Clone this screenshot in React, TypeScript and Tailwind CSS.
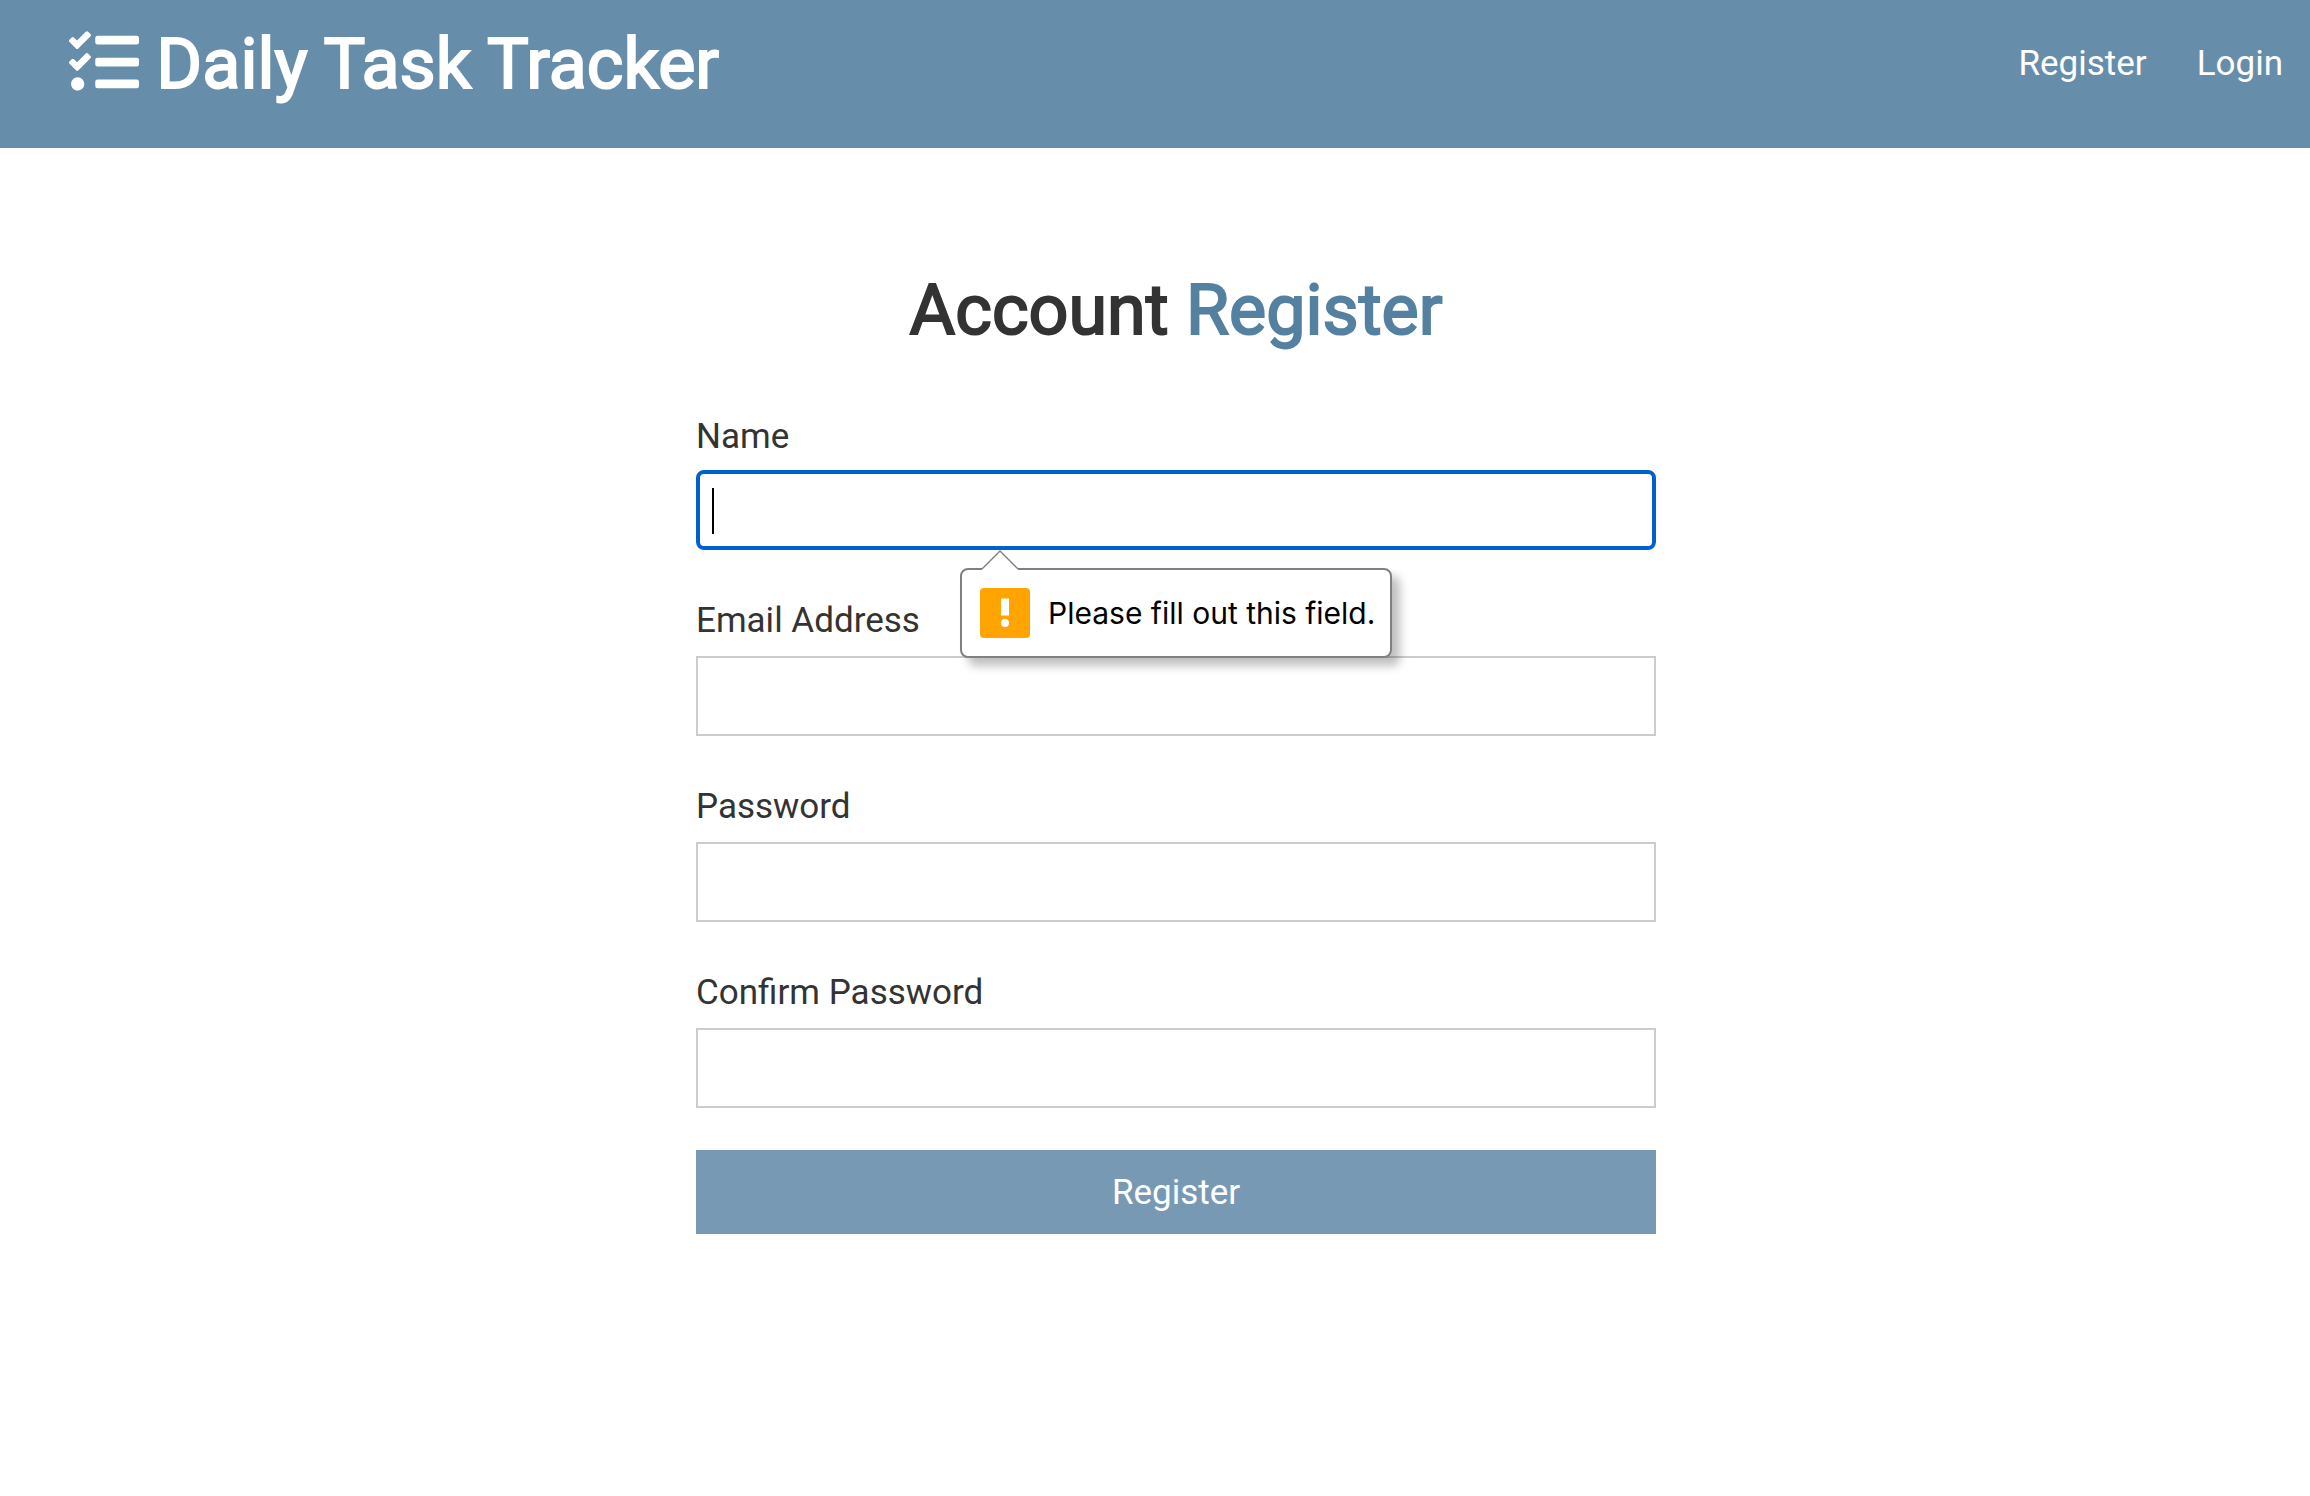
import { FaTasks } from "react-icons/fa";

const fields = [
  { id: "name", label: "Name", type: "text" },
  { id: "email", label: "Email Address", type: "email" },
  { id: "password", label: "Password", type: "password" },
  { id: "password2", label: "Confirm Password", type: "password" },
];

function Header() {
  return (
    <header className="flex items-center justify-between bg-[#668eaa] pt-6 pr-[27px] pb-11 pl-[69px] text-white">
      <h1 className="text-[70px] leading-[80px] font-normal [-webkit-text-stroke:2px_currentColor]">
        <FaTasks className="inline align-[-9px]" aria-hidden="true" /> Daily Task Tracker
      </h1>
      <nav className="flex gap-[50px]">
        <a href="#register">Register</a>
        <a href="#login">Login</a>
      </nav>
    </header>
  );
}

function ValidationBubble() {
  return (
    <div
      role="alert"
      className="absolute top-[98px] left-[264px] z-10 flex w-[432px] items-center gap-[18px] rounded-lg border-2 border-[#808080] bg-white p-[18px] font-['Inter',sans-serif] text-[30px] leading-[50px] whitespace-nowrap text-black shadow-[8px_8px_10px_rgba(0,0,0,0.25)]"
    >
      <svg className="absolute -top-5 left-5 h-5 w-9" viewBox="0 0 36 20" aria-hidden="true">
        <path d="M0 20V19L18 1L36 19V20Z" fill="#fff" />
        <path d="M0 19L18 1L36 19" fill="none" stroke="#808080" strokeWidth="1.4" />
      </svg>
      <svg className="size-[50px] shrink-0" viewBox="0 0 50 50" aria-hidden="true">
        <rect width="50" height="50" rx="4" fill="#ffa400" />
        <rect x="21" y="10.500" width="8" height="17" fill="#fff" />
        <circle cx="25" cy="35" r="4" fill="#fff" />
      </svg>
      <span>Please fill out this field.</span>
    </div>
  );
}

export default function App() {
  return (
    <div className="min-h-screen bg-white font-['Roboto',sans-serif] text-[35px] leading-[58px] text-[#333333]">
      <Header />
      <main className="pt-[122px] pl-[42px]">
        <div className="mx-auto max-w-[960px]">
          <h2 className="mb-[58px] text-center text-[70px] leading-[80px] font-normal [-webkit-text-stroke:2px_currentColor]">
            Account <span className="text-[#5581a1]">Register</span>
          </h2>
          <form className="flex flex-col gap-[42px]">
            {fields.map((field, i) => (
              <div key={field.id} className={i === 0 ? "flex flex-col gap-1" : "flex flex-col gap-1.5"}>
                <label htmlFor={field.id}>{field.label}</label>
                <div className="relative">
                  <input
                    id={field.id}
                    type={field.type}
                    required
                    className={
                      i === 0
                        ? "block h-20 w-full rounded-lg border-4 border-[#0060d0] px-3 outline-none"
                        : "block h-20 w-full border-2 border-[#cccccc] px-3 outline-none"
                    }
                  />
                  {i === 0 && (
                    <>
                      <span className="absolute top-[18px] left-4 h-[46px] w-0.5 bg-black" />
                      <ValidationBubble />
                    </>
                  )}
                </div>
              </div>
            ))}
            <button type="submit" className="h-[84px] w-full bg-[#7899b4] pt-px text-white">
              Register
            </button>
          </form>
        </div>
      </main>
    </div>
  );
}
